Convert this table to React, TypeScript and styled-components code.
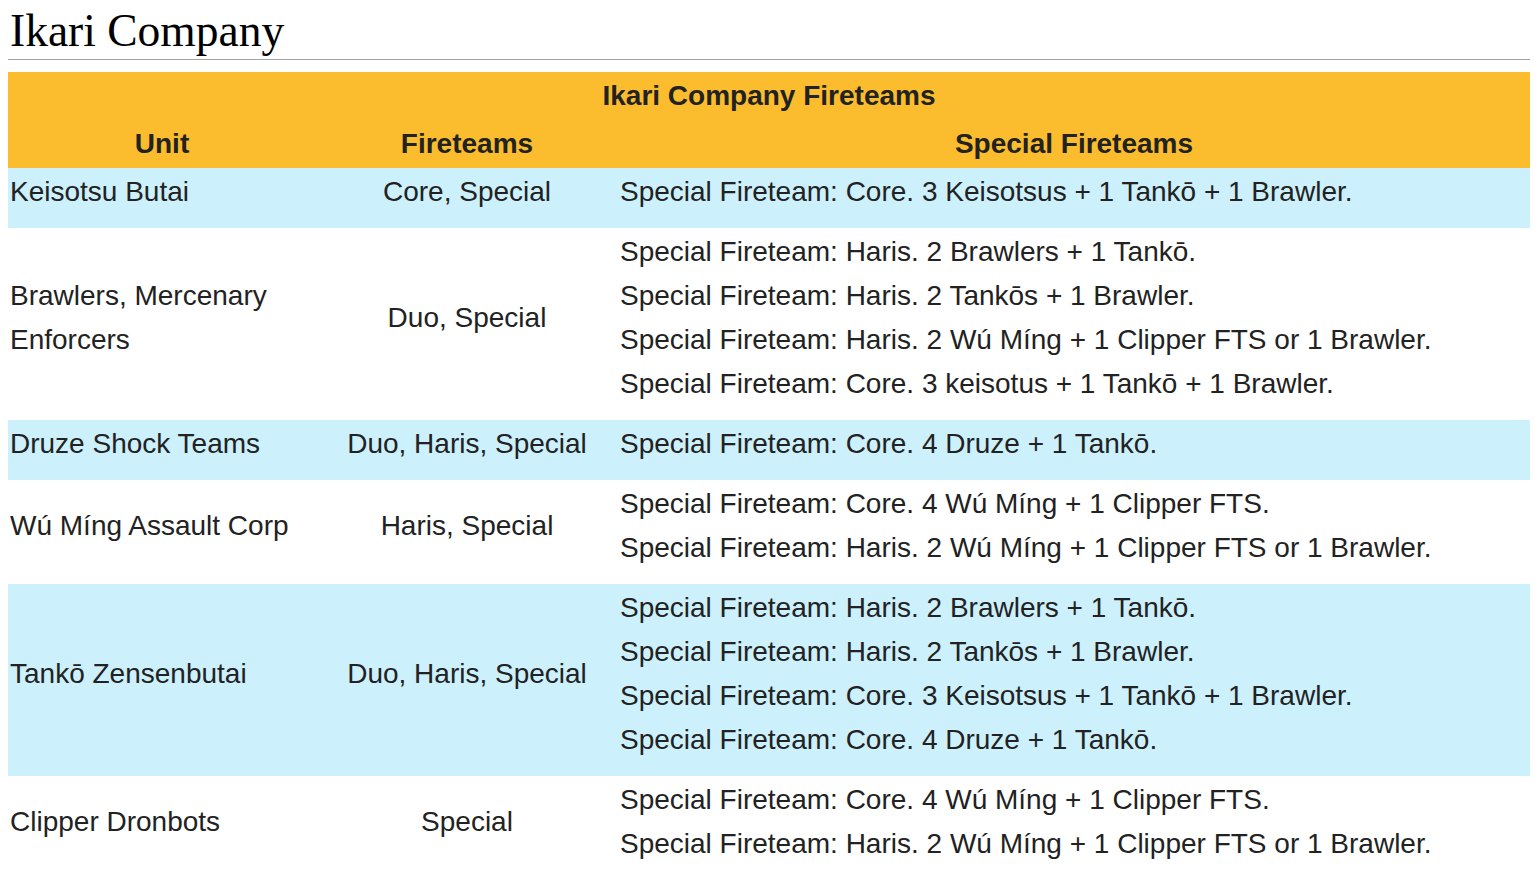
import React from "react";
import styled, { createGlobalStyle } from "styled-components";

const Global = createGlobalStyle`
  html, body { margin: 0; padding: 0; background: #fff; }
  body { padding: 0 8px 8px 8px; }
`;

const Page = styled.div`
  width: 1522px;
`;

const Title = styled.h1`
  margin: 0;
  padding: 8px 0 0 2px;
  height: 60px;
  box-sizing: border-box;
  font-family: "Liberation Serif", "DejaVu Serif", serif;
  font-weight: normal;
  font-size: 45.5px;
  line-height: 46px;
  color: #000;
  border-bottom: 1px solid #a2a2a2;
`;

const Table = styled.table`
  margin-top: 12px;
  width: 100%;
  border-collapse: collapse;
  border-spacing: 0;
  font-family: "Liberation Sans", Arial, sans-serif;
  font-size: 28px;
  color: #222;
  table-layout: fixed;
`;

const Caption = styled.th`
  background: #fbbd2d;
  font-weight: bold;
  height: 48px;
  padding: 0;
  text-align: center;
  vertical-align: middle;
  line-height: 48px;
`;

const HeadCell = styled.th`
  background: #fbbd2d;
  font-weight: bold;
  height: 48px;
  padding: 0 4px;
  text-align: center;
  vertical-align: middle;
  line-height: 48px;
`;

const Row = styled.tr<{ $shaded: boolean }>`
  background: ${(p) => (p.$shaded ? "#ccf0fc" : "#ffffff")};
`;

const UnitCell = styled.td`
  padding: 2px 3px 14px 2px;
  line-height: 44px;
  vertical-align: middle;
  text-align: left;
`;

const TeamCell = styled.td`
  padding: 2px 3px 14px;
  line-height: 44px;
  vertical-align: middle;
  text-align: center;
`;

const SpecialCell = styled.td`
  padding: 2px 2px 14px;
  line-height: 44px;
  vertical-align: middle;
  text-align: left;
`;

const Line = styled.div`
  white-space: nowrap;
`;

type Entry = { unit: string[]; teams: string; specials: string[] };

const data: Entry[] = [
  {
    unit: ["Keisotsu Butai"],
    teams: "Core, Special",
    specials: ["Special Fireteam: Core. 3 Keisotsus + 1 Tankō + 1 Brawler."],
  },
  {
    unit: ["Brawlers, Mercenary", "Enforcers"],
    teams: "Duo, Special",
    specials: [
      "Special Fireteam: Haris. 2 Brawlers + 1 Tankō.",
      "Special Fireteam: Haris. 2 Tankōs + 1 Brawler.",
      "Special Fireteam: Haris. 2 Wú Míng + 1 Clipper FTS or 1 Brawler.",
      "Special Fireteam: Core. 3 keisotus + 1 Tankō + 1 Brawler.",
    ],
  },
  {
    unit: ["Druze Shock Teams"],
    teams: "Duo, Haris, Special",
    specials: ["Special Fireteam: Core. 4 Druze + 1 Tankō."],
  },
  {
    unit: ["Wú Míng Assault Corp"],
    teams: "Haris, Special",
    specials: [
      "Special Fireteam: Core. 4 Wú Míng + 1 Clipper FTS.",
      "Special Fireteam: Haris. 2 Wú Míng + 1 Clipper FTS or 1 Brawler.",
    ],
  },
  {
    unit: ["Tankō Zensenbutai"],
    teams: "Duo, Haris, Special",
    specials: [
      "Special Fireteam: Haris. 2 Brawlers + 1 Tankō.",
      "Special Fireteam: Haris. 2 Tankōs + 1 Brawler.",
      "Special Fireteam: Core. 3 Keisotsus + 1 Tankō + 1 Brawler.",
      "Special Fireteam: Core. 4 Druze + 1 Tankō.",
    ],
  },
  {
    unit: ["Clipper Dronbots"],
    teams: "Special",
    specials: [
      "Special Fireteam: Core. 4 Wú Míng + 1 Clipper FTS.",
      "Special Fireteam: Haris. 2 Wú Míng + 1 Clipper FTS or 1 Brawler.",
    ],
  },
];

export default function App() {
  return (
    <Page>
      <Global />
      <Title>Ikari Company</Title>
      <Table>
        <colgroup>
          <col style={{ width: 308 }} />
          <col style={{ width: 302 }} />
          <col />
        </colgroup>
        <thead>
          <tr>
            <Caption colSpan={3}>Ikari Company Fireteams</Caption>
          </tr>
          <tr>
            <HeadCell>Unit</HeadCell>
            <HeadCell>Fireteams</HeadCell>
            <HeadCell>Special Fireteams</HeadCell>
          </tr>
        </thead>
        <tbody>
          {data.map((d, i) => (
            <Row key={i} $shaded={i % 2 === 0}>
              <UnitCell>
                {d.unit.map((u, j) => (
                  <Line key={j}>{u}</Line>
                ))}
              </UnitCell>
              <TeamCell>{d.teams}</TeamCell>
              <SpecialCell>
                {d.specials.map((s, j) => (
                  <Line key={j}>{s}</Line>
                ))}
              </SpecialCell>
            </Row>
          ))}
        </tbody>
      </Table>
    </Page>
  );
}
